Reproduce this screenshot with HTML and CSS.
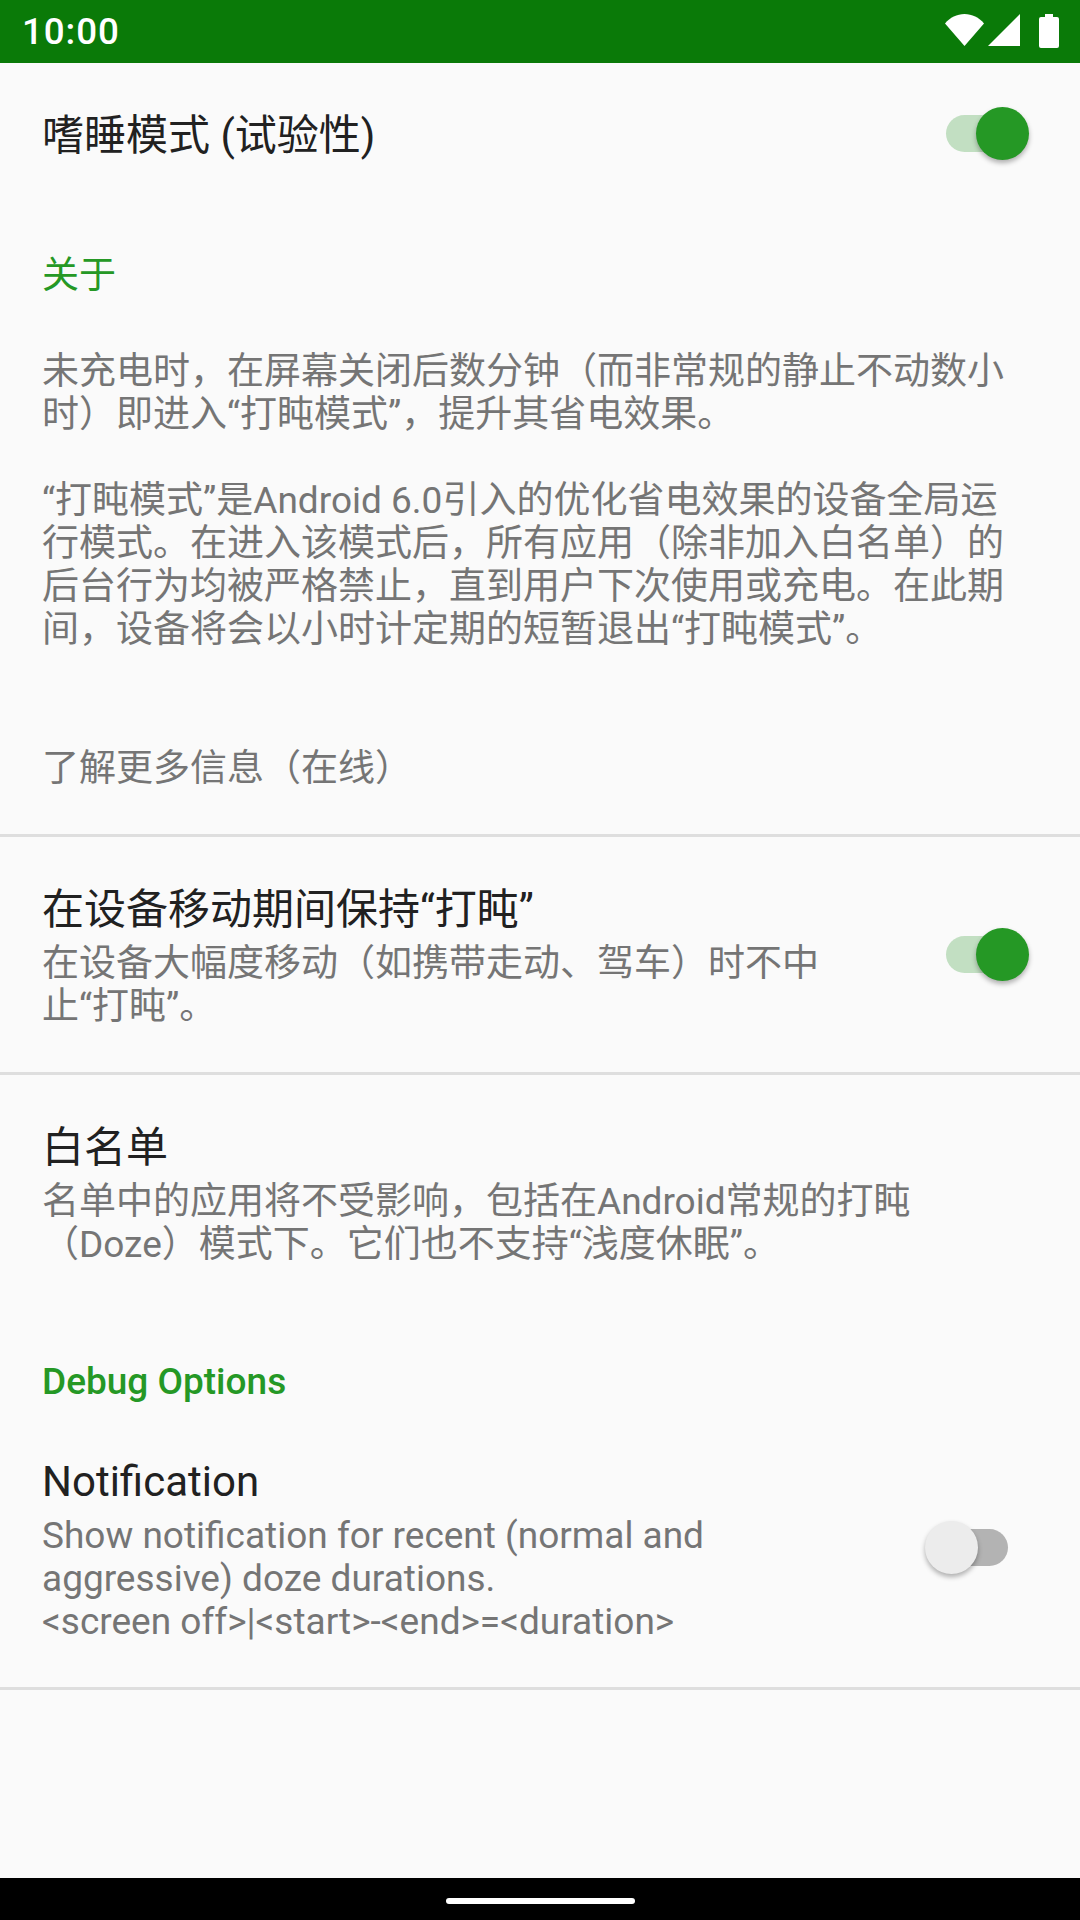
FILE: index.html
```html
<!DOCTYPE html>
<html lang="zh-CN">
<head>
    <meta charset="UTF-8">
    <meta name="viewport" content="width=device-width, initial-scale=1.0">
    <title>嗜睡模式</title>
    <link rel="stylesheet" href="styles.css">
</head>
<body>
    <div class="screen">
        <!-- Status bar -->
        <div class="status-bar">
            <span class="clock">10:00</span>
            <div class="status-icons">
                <svg class="icon-wifi" width="39" height="32" viewBox="0 0 39 32"><path d="M0 9.5C5 3.5 12 0 19.500 0S34 3.500 39 9.500L19.500 32Z" fill="#fff"/></svg>
                <svg class="icon-signal" width="32" height="32" viewBox="0 0 32 32"><path d="M32 0V32H0Z" fill="#fff"/></svg>
                <svg class="icon-battery" width="20" height="34" viewBox="0 0 20 34"><path d="M6 0H14V3H18Q20 3 20 5V32Q20 34 18 34H2Q0 34 0 32V5Q0 3 2 3H6Z" fill="#fff"/></svg>
            </div>
        </div>

        <div class="content">
            <!-- Master switch -->
            <div class="row row-master">
                <div class="row-text">
                    <div class="row-title">嗜睡模式 (试验性)</div>
                </div>
                <div class="switch on"><div class="track"></div><div class="thumb"></div></div>
            </div>

            <div class="category category-about">关于</div>
            <p class="about-text">未充电时，在屏幕关闭后数分钟（而非常规的静止不动数小时）即进入“打盹模式”，提升其省电效果。</p>
            <p class="about-text about-second">“打盹模式”是Android 6.0引入的优化省电效果的设备全局运行模式。在进入该模式后，所有应用（除非加入白名单）的后台行为均被严格禁止，直到用户下次使用或充电。在此期间，设备将会以小时计定期的短暂退出“打盹模式”。</p>
            <p class="about-text about-link">了解更多信息（在线）</p>
            <div class="divider"></div>

            <div class="row row-moving">
                <div class="row-text">
                    <div class="row-title">在设备移动期间保持“打盹”</div>
                    <div class="row-summary">在设备大幅度移动（如携带走动、驾车）时不中止“打盹”。</div>
                </div>
                <div class="switch on"><div class="track"></div><div class="thumb"></div></div>
            </div>
            <div class="divider"></div>

            <div class="row row-whitelist">
                <div class="row-text">
                    <div class="row-title">白名单</div>
                    <div class="row-summary">名单中的应用将不受影响，包括在Android常规的打盹（Doze）模式下。它们也不支持“浅度休眠”。</div>
                </div>
            </div>

            <div class="category category-debug">Debug Options</div>

            <div class="row row-notification">
                <div class="row-text">
                    <div class="row-title">Notification</div>
                    <div class="row-summary">Show notification for recent (normal and aggressive) doze durations.<br>&lt;screen off&gt;|&lt;start&gt;-&lt;end&gt;=&lt;duration&gt;</div>
                </div>
                <div class="switch off"><div class="track"></div><div class="thumb"></div></div>
            </div>
            <div class="divider"></div>
        </div>

        <!-- Navigation bar -->
        <div class="nav-bar"><div class="nav-handle"></div></div>
    </div>
</body>
</html>
```

FILE: styles.css
```css
body {
    margin: 0;
    background-color: #fafafa;
    font-family: Roboto, "Noto Sans CJK SC", sans-serif;
}

.screen {
    width: 1080px;
    height: 1920px;
    display: flex;
    flex-direction: column;
    overflow: hidden;
}

.status-bar {
    height: 63px;
    flex-shrink: 0;
    background-color: #0a7a08;
    color: white;
    display: flex;
    justify-content: space-between;
    padding: 0 21px 0 22px;
}

.clock {
    font-size: 36.75px;
    font-weight: 500;
    line-height: 63px;
    letter-spacing: 0.9px;
}

.status-icons {
    display: flex;
    padding-top: 14px;
}

.icon-signal {
    margin-left: 4px;
}

.icon-battery {
    margin-left: 19px;
}

.content {
    flex: 1;
}

.row {
    display: flex;
    justify-content: space-between;
    align-items: center;
    padding: 0 72px 0 42px;
}

.row-text {
    flex: 1;
}

.row-title {
    font-size: 42px;
    line-height: 61px;
    margin-bottom: 2px;
    color: #212121;
}

.row-summary {
    width: 800px;
    font-size: 37px;
    line-height: 43px;
    color: #757575;
}

.row-master {
    padding-top: 42px;
}

.row-master .switch {
    margin-bottom: 7px;
}

.row-moving {
    padding-top: 42px;
    padding-bottom: 44px;
}

.row-moving .switch {
    margin-top: 2px;
}

.row-whitelist {
    padding-top: 42px;
}

.row-whitelist .row-summary {
    width: 880px;
}

.row-notification {
    padding-top: 48px;
    padding-bottom: 44px;
}

.category {
    font-size: 37px;
    line-height: 43px;
    color: #259825;
    padding: 0 42px;
}

.category-about {
    margin-top: 86px;
}

.category-debug {
    margin-top: 94px;
    font-weight: 500;
}

.about-text {
    margin: 53px 63px 0 42px;
    font-size: 37px;
    line-height: 43px;
    color: #757575;
}

.about-second {
    margin-top: 43px;
}

.about-link {
    margin-top: 96px;
    padding-bottom: 44px;
}

.divider {
    height: 3px;
    background-color: #dedede;
}

/* thumb hangs over both ends of the track */
.switch {
    position: relative;
    width: 62px;
    height: 37px;
    flex-shrink: 0;
}

.track {
    height: 37px;
    border-radius: 19px;
}

.thumb {
    position: absolute;
    top: -8px;
    width: 53px;
    height: 53px;
    border-radius: 50%;
    box-shadow: 0 3px 5px rgba(0, 0, 0, 0.3);
}

.on .track {
    background-color: #c2dfc2;
}

.on .thumb {
    right: -21px;
    background-color: #259825;
}

.off .track {
    background-color: #b3b3b3;
}

.off .thumb {
    left: -21px;
    background-color: #ececec;
}

.nav-bar {
    height: 42px;
    flex-shrink: 0;
    background-color: black;
    display: flex;
    justify-content: center;
    padding-top: 20px;
    box-sizing: border-box;
}

.nav-handle {
    width: 189px;
    height: 6px;
    border-radius: 3px;
    background-color: white;
}
```
